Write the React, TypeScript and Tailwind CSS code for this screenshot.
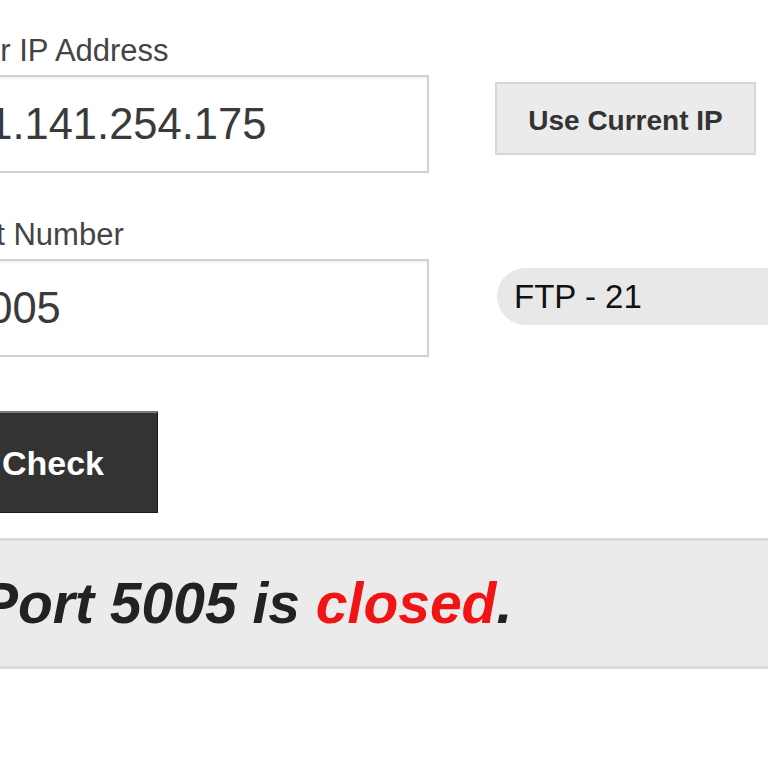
import React from "react";

export default function App() {
  return (
    <div
      className="w-[768px] h-[768px] overflow-hidden bg-white"
      style={{ fontFamily: '"Liberation Sans", Helvetica, Arial, sans-serif' }}
    >
      <div className="ml-[-52px] pt-[33px] flex flex-col">
        {/* IP row */}
        <div className="flex items-start">
          <div className="w-[481px] shrink-0 flex flex-col">
            <label className="text-[31px] leading-[36px] text-[#444]">Your IP Address</label>
            <input
              readOnly
              value="51.141.254.175"
              className="mt-[6px] h-[98px] w-full border-2 border-[#d2d2d2] bg-white pl-[14px] text-[43.5px] text-[#3a3a3a] shadow-[inset_0_1px_2px_rgba(0,0,0,0.08)] outline-none"
            />
          </div>
          <button className="ml-[66px] mt-[49px] h-[73px] w-[261px] shrink-0 border-2 border-[#d6d6d6] bg-[#ebebeb] pt-[4px] text-[28px] font-bold text-[#333]">
            Use Current IP
          </button>
        </div>

        {/* Port row */}
        <div className="mt-[44px] flex items-start">
          <div className="w-[481px] shrink-0 flex flex-col">
            <label className="text-[31px] leading-[36px] text-[#444]">Port Number</label>
            <input
              readOnly
              value="5005"
              className="mt-[6px] h-[98px] w-full border-2 border-[#d2d2d2] bg-white pl-[14px] text-[43.5px] text-[#3a3a3a] shadow-[inset_0_1px_2px_rgba(0,0,0,0.08)] outline-none"
            />
          </div>
          <div className="ml-[68px] mt-[51px] flex h-[57px] w-[360px] shrink-0 items-center rounded-l-[29px] bg-[#e8e8e8] pl-[17px] text-[33px] text-[#111]">
            FTP - 21
          </div>
        </div>

        {/* Check button */}
        <div className="mt-[54px] flex">
          <button className="h-[102px] w-[210px] border border-[#1a1a1a] border-t-2 border-t-[#7a7a7a] bg-[#333] pt-[2px] text-[34px] font-bold text-white">
            Check
          </button>
        </div>

        {/* Result */}
        <div className="mt-[25px] flex h-[131px] w-[900px] items-center border-y-[3px] border-[#dcdcdc] bg-[#ebebeb] pl-[32px]">
          <p className="text-[57px] font-bold italic text-[#222]">
            Port 5005 is <span className="text-[#f01414]">closed</span>.
          </p>
        </div>
      </div>
    </div>
  );
}
